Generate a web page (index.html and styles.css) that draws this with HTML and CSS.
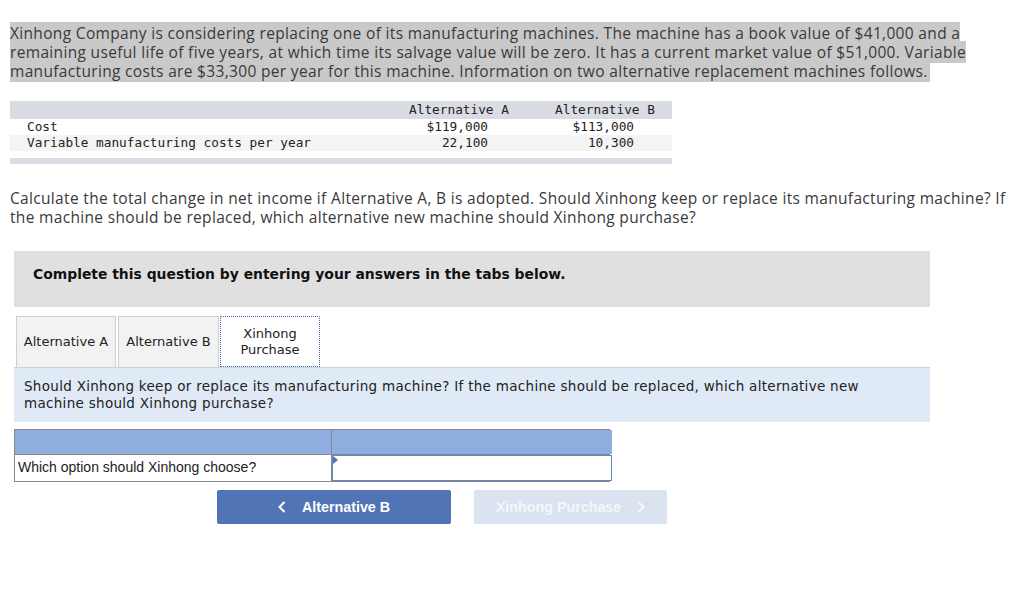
FILE: index.html
```html
<!DOCTYPE html>
<html>
<head>
<meta charset="utf-8">
<link rel="stylesheet" href="styles.css">
</head>
<body>
<p class="intro"><span class="hl"><span class="hltext">Xinhong Company is considering replacing one of its manufacturing machines. The machine has a book value of $41,000 and a remaining useful life of five years, at which time its salvage value will be zero. It has a current market value of $51,000. Variable manufacturing costs are $33,300 per year for this machine. Information on two alternative replacement machines follows.</span></span></p>

<div class="data">
  <div class="row head"><span></span><span class="c">Alternative A</span><span class="c">Alternative B</span></div>
  <div class="row"><span class="lbl">Cost</span><span class="v">$119,000</span><span class="v">$113,000</span></div>
  <div class="row alt"><span class="lbl">Variable manufacturing costs per year</span><span class="v">22,100</span><span class="v">10,300</span></div>
  <div class="bar"></div>
</div>

<p class="prompt">Calculate the total change in net income if Alternative A, B is adopted. Should Xinhong keep or replace its manufacturing machine? If the machine should be replaced, which alternative new machine should Xinhong purchase?</p>

<div class="notice">Complete this question by entering your answers in the tabs below.</div>

<div class="tabs">
  <div class="tab">Alternative A</div>
  <div class="tab">Alternative B</div>
  <div class="tab active">Xinhong<br>Purchase</div>
</div>

<div class="qbox">Should Xinhong keep or replace its manufacturing machine? If the machine should be replaced, which alternative new machine should Xinhong purchase?</div>

<div class="answer">
  <div class="ahead"></div>
  <div class="ahead"></div>
  <div class="acell">Which option should Xinhong choose?</div>
  <div class="acell input"><span class="marker"></span></div>
</div>

<div class="nav">
  <button class="btn prev"><svg class="chev" width="8" height="12" viewBox="0 0 8 12"><path d="M6.5 1 L1.5 6 L6.5 11" fill="none" stroke="#fff" stroke-width="2"/></svg>Alternative B</button>
  <button class="btn next">Xinhong Purchase<svg class="chev r" width="8" height="12" viewBox="0 0 8 12"><path d="M1.5 1 L6.5 6 L1.5 11" fill="none" stroke="#f4f7fb" stroke-width="2"/></svg></button>
</div>
</body>
</html>
```
FILE: styles.css
```css
body {
  margin: 0;
  background: #fff;
  font-family: "Open Sans", "Liberation Sans", sans-serif;
  color: #333;
}
.intro {
  margin: 0;
  padding: 24px 0 0 10px;
  width: 965px;
  font-size: 15.5px;
  letter-spacing: 0.33px;
  line-height: 19px;
  color: #3a3a3a;
}
.hl {
  background: #c9c9c9;
  padding: 0 2px 0 0;
}
.hltext { position: relative; }
.data {
  margin: 20px 0 0 10px;
  width: 662px;
  font-family: "DejaVu Sans Mono", monospace;
  font-size: 12.75px;
  color: #222;
}
.row {
  display: grid;
  grid-template-columns: 1fr 134px 134px;
  column-gap: 12px;
  height: 16px;
  line-height: 16px;
}
.row.head {
  background: #d9dce3;
  height: 18px;
  line-height: 17px;
}
.row.alt { background: #f4f4f4; }
.lbl { padding-left: 17px; white-space: nowrap; }
.c { text-align: center; }
.v { text-align: right; padding-right: 38px; }
.bar {
  margin-top: 7px;
  height: 6px;
  background: #d9dce3;
}
.prompt {
  margin: 0;
  padding: 25px 0 0 10px;
  width: 1014px;
  font-size: 15.5px;
  letter-spacing: 0.33px;
  line-height: 19px;
  color: #3a3a3a;
}
.notice {
  margin: 24px 0 0 14px;
  width: 916px;
  height: 56px;
  box-sizing: border-box;
  padding: 14px 19px 0;
  background: #e0e0e0;
  font-family: "DejaVu Sans", sans-serif;
  font-weight: bold;
  font-size: 13.9px;
  line-height: 18px;
  color: #111;
}
.tabs {
  display: flex;
  margin: 9px 0 0 16px;
  gap: 2px;
  height: 51px;
}
.tab {
  box-sizing: border-box;
  width: 100px;
  height: 51px;
  display: flex;
  align-items: center;
  justify-content: center;
  text-align: center;
  background: #f2f2f2;
  border: 1px solid #cfcfcf;
  border-bottom: none;
  font-family: "DejaVu Sans", sans-serif;
  font-size: 13px;
  line-height: 16px;
  color: #222;
}
.tab:nth-child(2) { width: 101px; }
.tab.active {
  background: #fff;
  border: 1px dotted #4a6aa8;
  margin-left: -1px;
}
.qbox {
  margin: 0 0 0 14px;
  width: 916px;
  height: 55px;
  box-sizing: border-box;
  padding: 10px 60px 0 10px;
  background: #dfeaf6;
  border-top: 1px solid #c8d3e0;
  font-family: "DejaVu Sans", sans-serif;
  font-size: 13.5px;
  letter-spacing: 0.3px;
  line-height: 17px;
  color: #222;
}
.answer {
  margin: 7px 0 0 14px;
  width: 596px;
  display: grid;
  grid-template-columns: 316px 280px;
  grid-template-rows: 24px 26px;
  box-sizing: border-box;
  border: 1px solid #888;
  background: #888;
  gap: 1px;
}
.ahead { background: #8eaee0; }
.acell {
  background: #fff;
  font-family: "Liberation Sans", Arial, sans-serif;
  font-size: 14px;
  color: #222;
  display: flex;
  align-items: center;
  padding-left: 3px;
  padding-bottom: 2px;
}
.acell.input {
  position: relative;
  border: 1px solid #6486c8;
  box-sizing: border-box;
}
.marker {
  position: absolute;
  left: 0;
  top: 0;
  width: 0;
  height: 0;
  border-top: 4px solid transparent;
  border-bottom: 4px solid transparent;
  border-left: 5px solid #4f73b5;
}
.nav {
  display: flex;
  margin: 8px 0 0 217px;
  gap: 23px;
}
.btn {
  height: 34px;
  border: none;
  border-radius: 2px;
  font-family: "Liberation Sans", Arial, sans-serif;
  font-weight: bold;
  font-size: 14.3px;
  color: #fff;
  display: flex;
  align-items: center;
  justify-content: center;
  padding: 0;
}
.btn.prev { width: 234px; background: #5074b6; }
.btn.next { width: 193px; background: #dae3ef; color: #f4f7fb; }
.chev { margin-right: 16px; }
.chev.r { margin-right: 0; margin-left: 16px; }
```
